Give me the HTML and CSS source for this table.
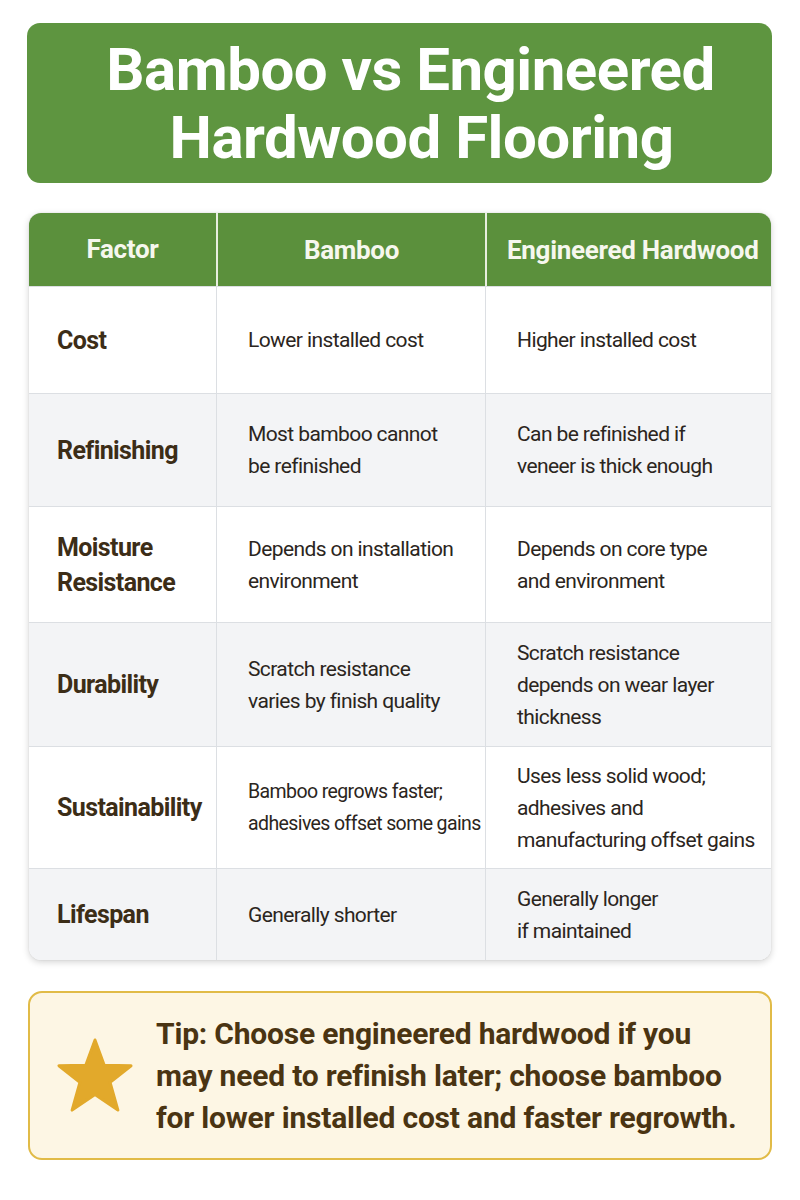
FILE: index.html
```html
<!DOCTYPE html>
<html lang="en">
<head>
<meta charset="utf-8">
<title>Bamboo vs Engineered Hardwood Flooring</title>
<link rel="stylesheet" href="styles.css">
</head>
<body>
<main class="page">
  <header class="title-box">
    <h1 class="title"><span class="t1">Bamboo vs Engineered</span><span class="t2">Hardwood Flooring</span></h1>
  </header>

  <section class="table">
    <div class="row head">
      <div class="cell c1">Factor</div>
      <div class="cell c2">Bamboo</div>
      <div class="cell c3">Engineered Hardwood</div>
    </div>
    <div class="row r-cost">
      <div class="cell c1">Cost</div>
      <div class="cell c2">Lower installed cost</div>
      <div class="cell c3">Higher installed cost</div>
    </div>
    <div class="row alt r-refin">
      <div class="cell c1">Refinishing</div>
      <div class="cell c2">Most bamboo cannot<br>be refinished</div>
      <div class="cell c3">Can be refinished if<br>veneer is thick enough</div>
    </div>
    <div class="row r-moist">
      <div class="cell c1">Moisture<br>Resistance</div>
      <div class="cell c2">Depends on installation<br>environment</div>
      <div class="cell c3">Depends on core type<br>and environment</div>
    </div>
    <div class="row alt r-dur">
      <div class="cell c1">Durability</div>
      <div class="cell c2">Scratch resistance<br>varies by finish quality</div>
      <div class="cell c3">Scratch resistance<br>depends on wear layer<br>thickness</div>
    </div>
    <div class="row r-sus">
      <div class="cell c1">Sustainability</div>
      <div class="cell c2 small">Bamboo regrows faster;<br>adhesives offset some gains</div>
      <div class="cell c3">Uses less solid wood;<br>adhesives and<br>manufacturing offset gains</div>
    </div>
    <div class="row alt r-life">
      <div class="cell c1">Lifespan</div>
      <div class="cell c2">Generally shorter</div>
      <div class="cell c3">Generally longer<br>if maintained</div>
    </div>
  </section>

  <aside class="tip">
    <svg class="star" viewBox="0 0 80 80" width="78" height="78" aria-hidden="true">
      <path d="M40 3 L49.5 29 L77 29.5 L55.5 46.5 L63.5 75 L40 59 L16.5 75 L24.5 46.5 L3 29.5 L30.5 29 Z" fill="#e2a92b" stroke="#e2a92b" stroke-width="3" stroke-linejoin="round"/>
    </svg>
    <p class="tip-text">Tip: Choose engineered hardwood if you<br>may need to refinish later; choose bamboo<br>for lower installed cost and faster regrowth.</p>
  </aside>
</main>
</body>
</html>
```

FILE: styles.css
```css
* { box-sizing: border-box; }
html, body { margin: 0; padding: 0; background: #ffffff; }
body {
  font-family: Roboto, "Liberation Sans", Arial, sans-serif;
  color: #2b2520;
}
.page {
  width: 800px;
  padding: 23px 28px 0 27px;
  display: flex;
  flex-direction: column;
}
.title-box {
  background: #5e9540;
  border-radius: 13px;
  height: 160px;
  display: flex;
  align-items: center;
  justify-content: center;
  padding-left: 22px;
  padding-top: 2px;
}
.title {
  margin: 0;
  color: #ffffff;
  font-size: 60px;
  font-weight: 700;
  line-height: 68px;
  text-align: center;
  letter-spacing: -0.5px;
  display: flex;
  flex-direction: column;
  align-items: center;
}
.t2 { padding-left: 22px; }
.table {
  margin: 30px 1px 0 2px;
  border-radius: 12px;
  overflow: hidden;
  background: #ffffff;
  box-shadow: 0 2px 7px rgba(0,0,0,0.18), 0 0 1px rgba(0,0,0,0.2);
}
.row {
  display: grid;
  grid-template-columns: 187px 269px 1fr;
  border-top: 1px solid #dcdfe3;
}
.row.alt { background: #f3f4f6; }
.row.head {
  background: #5b903c;
  border-top: none;
  height: 73px;
}
.cell {
  display: flex;
  align-items: center;
  font-size: 21px;
  line-height: 32px;
  letter-spacing: -0.6px;
  white-space: nowrap;
  color: #2b2520;
  padding-left: 31px;
}
.cell + .cell { border-left: 1px solid #dcdfe3; }
.head .cell {
  color: #f6f7ee;
  font-weight: 700;
  font-size: 26px;
  letter-spacing: -0.3px;
  justify-content: center;
  padding-left: 0;
}
.head .cell + .cell { border-left: 2px solid #e8eedf; }
.head .c3 { justify-content: flex-start; padding-left: 20px; }
.cell.c1 {
  font-weight: 700;
  font-size: 25px;
  line-height: 35px;
  letter-spacing: -0.6px;
  color: #3c2d17;
  padding-left: 28px;
}
.head .cell.c1 { color: #f6f7ee; font-size: 26px; letter-spacing: -0.3px; padding-left: 0; }
.cell.small { font-size: 19.5px; letter-spacing: -0.6px; }
.r-cost { height: 107px; }
.r-refin { height: 113px; }
.r-moist { height: 116px; }
.r-dur { height: 124px; }
.r-sus { height: 122px; }
.r-life { height: 92px; }

.tip {
  margin: 31px 0 0 1px;
  height: 169px;
  border: 2px solid #e1bb47;
  border-radius: 14px;
  background: #fdf6e4;
  display: flex;
  align-items: center;
  padding-left: 26px;
}
.star { flex: none; margin-right: 22px; }
.tip-text {
  margin: 0;
  font-size: 30px;
  font-weight: 700;
  line-height: 42px;
  letter-spacing: -0.2px;
  color: #4a3412;
}
```
